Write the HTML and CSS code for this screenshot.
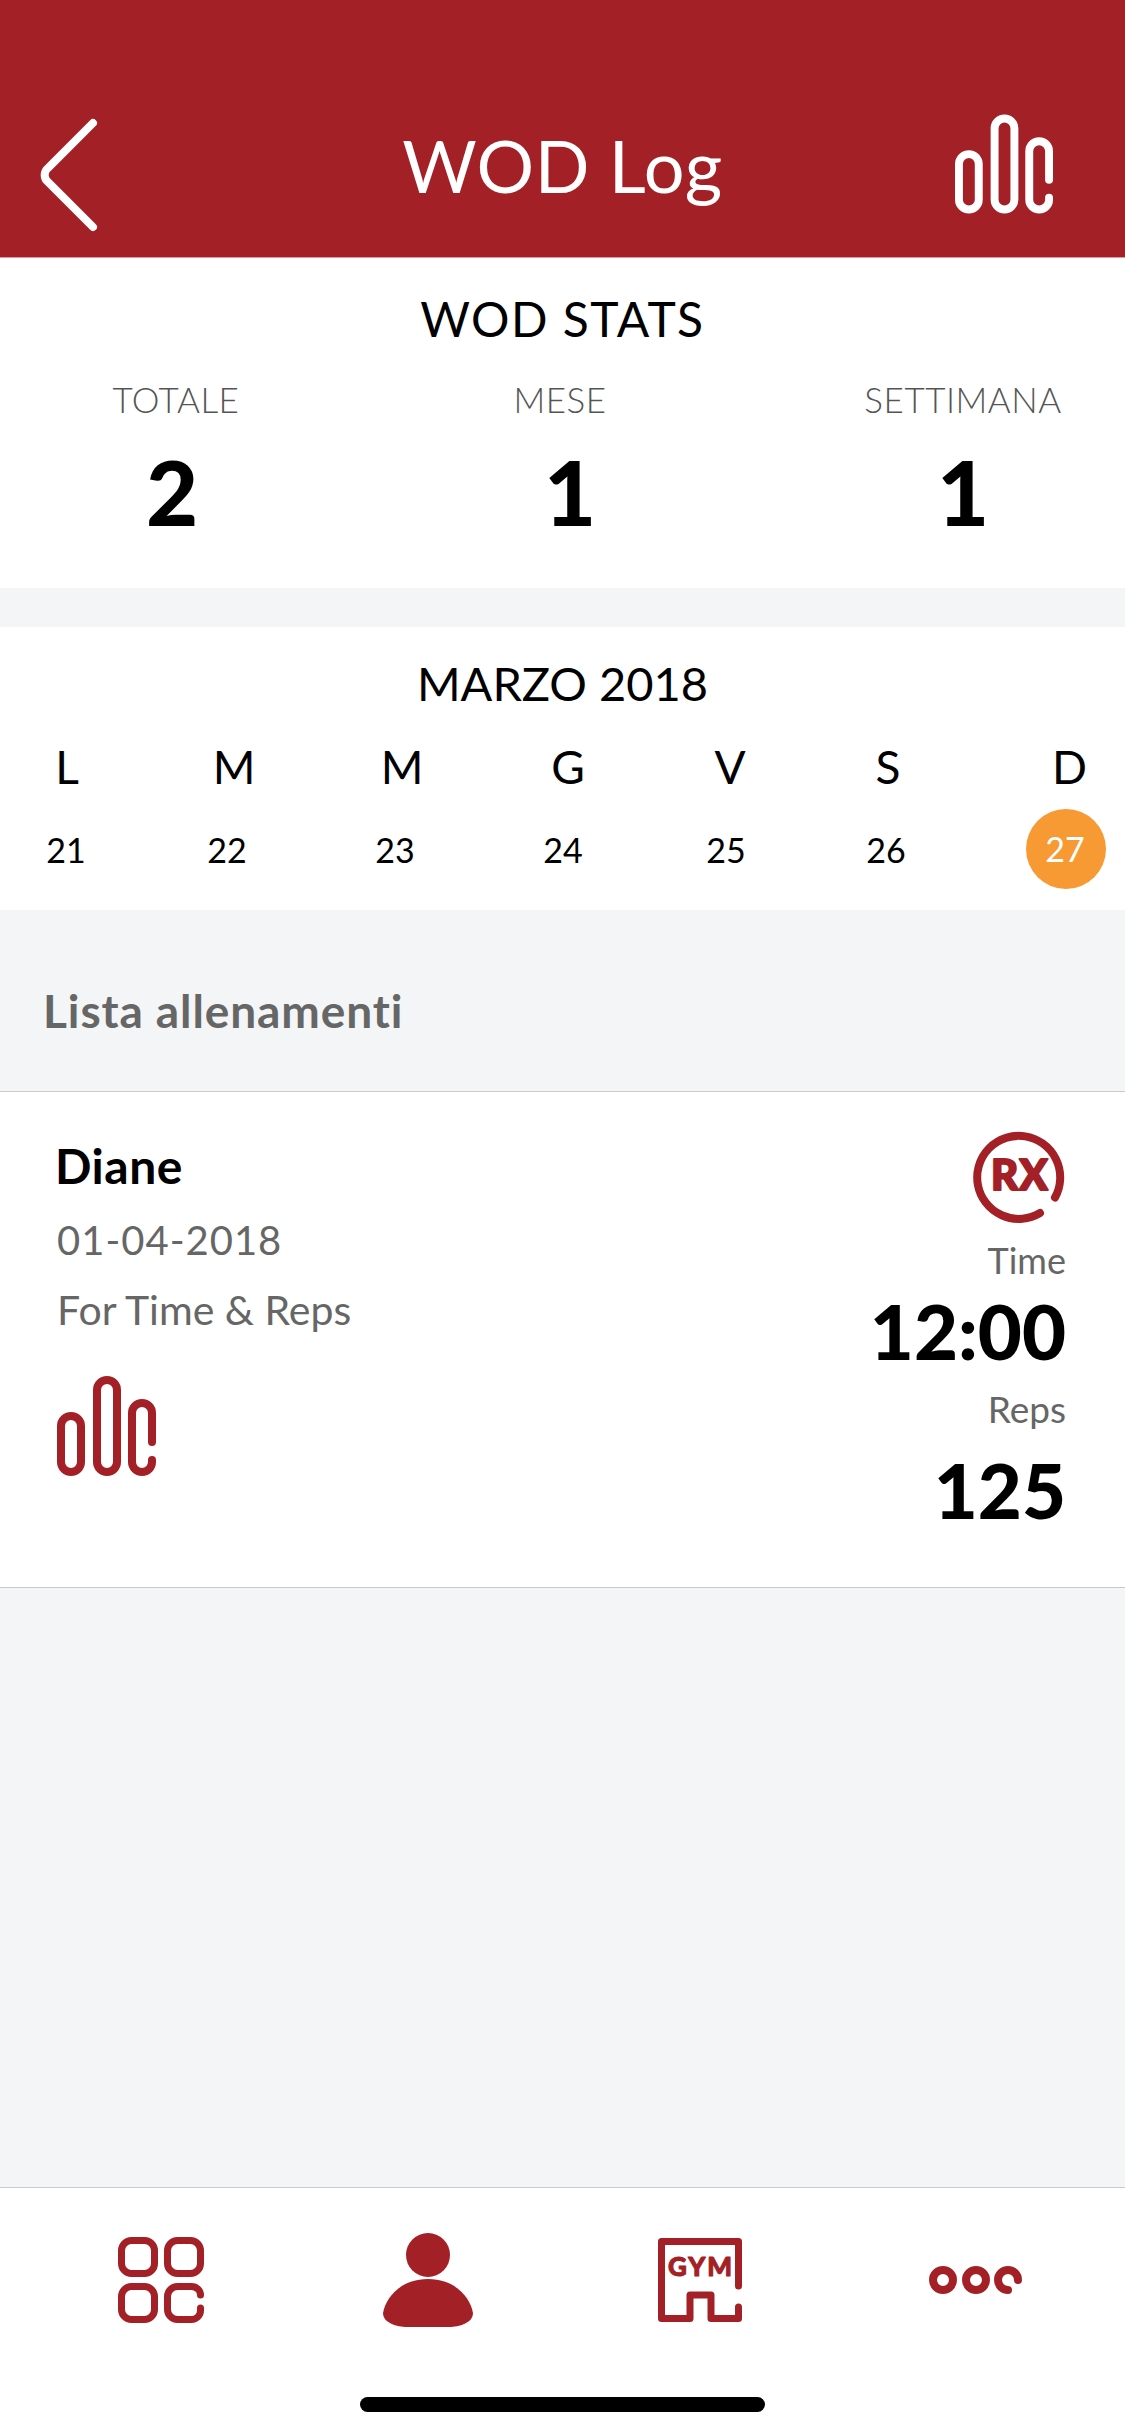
FILE: index.html
```html
<!DOCTYPE html>
<html lang="it">
<head>
  <meta charset="UTF-8" />
  <title>WOD Log</title>
  <link rel="stylesheet" href="styles.css">
</head>
<body>

<svg class="defs" width="0" height="0">
  <symbol id="bars" viewBox="0 0 100 100">
    <g fill="none" stroke="currentColor" stroke-width="8" stroke-linecap="round">
      <rect x="4" y="40" width="20" height="56" rx="10" />
      <rect x="40" y="4" width="20" height="92" rx="10" />
      <path d="M95 66V37a10 10 0 0 0-20 0V86a10 10 0 0 0 20 0V84" />
    </g>
  </symbol>
</svg>

<header class="topbar">
  <svg class="back" viewBox="0 0 60 116">
    <path d="M54 6L9 51a9 9 0 0 0 0 14L54 110" fill="none" stroke="currentColor" stroke-width="8" stroke-linecap="round" />
  </svg>
  <h1>WOD Log</h1>
  <svg class="bars-top"><use href="#bars" /></svg>
</header>

<section class="stats">
  <h2>WOD STATS</h2>
  <div class="stat-labels">
    <span>TOTALE</span>
    <span>MESE</span>
    <span>SETTIMANA</span>
  </div>
  <div class="stat-nums">
    <span>2</span>
    <span>1</span>
    <span>1</span>
  </div>
</section>

<section class="calendar">
  <h2>MARZO 2018</h2>
  <div class="week-days">
    <span>L</span><span>M</span><span>M</span><span>G</span><span>V</span><span>S</span><span>D</span>
  </div>
  <div class="week-dates">
    <span>21</span><span>22</span><span>23</span><span>24</span><span>25</span><span>26</span>
    <span class="today">27</span>
  </div>
</section>

<h3 class="list-title">Lista allenamenti</h3>

<article class="wod">
  <div class="wod-info">
    <div class="wod-name">Diane</div>
    <div class="wod-date">01-04-2018</div>
    <div class="wod-type">For Time &amp; Reps</div>
    <svg class="bars-card"><use href="#bars" /></svg>
  </div>
  <div class="wod-score">
    <svg class="rx" viewBox="0 0 92 92">
      <path d="M66 84A41.5 41.5 0 1 1 81 68.500" fill="none" stroke="currentColor" stroke-width="8" stroke-linecap="round" />
      <text x="46" y="61" text-anchor="middle">RX</text>
    </svg>
    <div class="score-label">Time</div>
    <div class="score-value">12:00</div>
    <div class="score-label reps">Reps</div>
    <div class="score-value total">125</div>
  </div>
</article>

<div class="spacer"></div>

<nav class="tabbar">
  <div class="tabs">
    <svg class="tab-grid" viewBox="0 0 86 86">
      <g fill="none" stroke="currentColor" stroke-width="7" stroke-linecap="round">
        <rect x="3.500" y="3.500" width="33" height="33" rx="10" />
        <rect x="49.500" y="3.500" width="33" height="33" rx="10" />
        <rect x="3.500" y="49.500" width="33" height="33" rx="10" />
        <path d="M82.500 58a9 8.500 0 0 0-9-8.500H59.500a10 10 0 0 0-10 10V72.500a10 10 0 0 0 10 10H73.500a9 9 0 0 0 9-9V71" />
      </g>
    </svg>
    <svg class="tab-user" viewBox="0 0 90 94">
      <circle cx="45" cy="22" r="22" />
      <path d="M45 46C18 46 3 64 0 80c0 10 14 14 24 14H66c10 0 24-4 24-14C87 64 72 46 45 46z" />
    </svg>
    <svg class="tab-gym" viewBox="0 0 84 84">
      <path d="M80.500 48V3.500H3.500V80.500H32V57H53V80.500H80.500V69" fill="none" stroke="currentColor" stroke-width="7" stroke-linecap="round" stroke-linejoin="round" />
      <text x="43" y="38" text-anchor="middle">GYM</text>
    </svg>
    <svg class="tab-more" viewBox="0 0 93 28">
      <g fill="none" stroke="currentColor" stroke-width="8" stroke-linecap="round">
        <circle cx="14" cy="14" r="10" />
        <circle cx="47" cy="14" r="10" />
        <path d="M79 24A10 10 0 1 1 89 14" />
      </g>
    </svg>
  </div>
  <div class="home-bar"></div>
</nav>

</body>
</html>
```

FILE: styles.css
```css
* {
  box-sizing: border-box;
}

html, body {
  height: 100%;
}

body {
  margin: 0;
  width: 1125px;
  height: 2436px;
  display: flex;
  flex-direction: column;
  overflow: hidden;
  background-color: #f4f5f7;
  color: #000;
  font-family: Lato, "Open Sans", sans-serif;
  font-variant-ligatures: none;
}

h1, h2, h3 {
  margin: 0;
  font-weight: 400;
}

.defs {
  position: absolute;
}

/* top bar */
.topbar {
  height: 258px;
  display: grid;
  grid-template-columns: 1fr auto 1fr;
  align-items: end;
  background-color: #a32027;
  border-bottom: 1px solid #d8a0a3;
  color: #fff;
}

.back {
  width: 60px;
  height: 116px;
  margin: 0 0 24px 39px;
}

.topbar h1 {
  font-size: 72px;
  font-weight: 400;
  line-height: 90px;
  letter-spacing: 0.5px;
  margin-bottom: 47px;
}

.bars-top {
  width: 99px;
  height: 100px;
  justify-self: end;
  margin: 0 71px 43px 0;
}

/* stats */
.stats {
  height: 330px;
  background-color: #fff;
  text-align: center;
}

.stats h2 {
  font-size: 48px;
  line-height: 60px;
  padding-top: 31px;
  height: 91px;
  letter-spacing: 1.500px;
}

.stat-labels,
.stat-nums {
  display: grid;
  text-align: center;
}

.stat-labels {
  grid-template-columns: 352px 416px 1fr;
  margin-top: 28px;
  font-size: 35px;
  font-weight: 300;
  line-height: 44px;
  letter-spacing: 0.5px;
  color: #555;
}

.stat-labels span:last-child {
  padding-left: 33px;
}

.stat-nums {
  grid-template-columns: 344px 452px 1fr;
  margin-top: 20px;
  font-size: 90px;
  font-weight: 900;
  line-height: 100px;
}

.stat-nums span:last-child {
  padding-left: 5px;
}

/* calendar */
.calendar {
  height: 283px;
  margin-top: 39px;
  background-color: #fff;
}

.calendar h2 {
  font-size: 47px;
  line-height: 60px;
  padding-top: 26px;
  height: 88px;
  text-align: center;
}

.week-days,
.week-dates {
  display: grid;
  text-align: center;
}

.week-days {
  grid-template-columns: 134px 200px 136px 196px 128px 188px 143px;
  margin-top: 22px;
  font-size: 46px;
  line-height: 60px;
}

.week-days span:last-child {
  text-align: right;
  padding-right: 38px;
}

.week-dates {
  grid-template-columns: 132px 190px 146px 190px 136px 184px 147px;
  align-items: center;
  font-size: 34px;
  height: 80px;
  margin-top: 12px;
}

.today {
  width: 80px;
  height: 80px;
  justify-self: end;
  margin-right: 19px;
  padding-right: 2px;
  border-radius: 50%;
  background-color: #f79a33;
  color: #fff;
  line-height: 80px;
}

/* list */
.list-title {
  height: 182px;
  padding: 73px 0 0 43px;
  font-size: 46px;
  font-weight: 700;
  line-height: 56px;
  letter-spacing: 0.9px;
  color: #666;
  border-bottom: 1px solid #c9cacc;
}

.wod {
  height: 496px;
  display: flex;
  justify-content: space-between;
  background-color: #fff;
  border-bottom: 1px solid #c9cacc;
  padding: 0 59px 0 55px;
}

.wod-name {
  margin-top: 44px;
  font-size: 48px;
  font-weight: 700;
  line-height: 60px;
  letter-spacing: 0.5px;
}

.wod-date {
  margin: 16px 0 0 2px;
  font-size: 40px;
  line-height: 56px;
  color: #666;
  letter-spacing: 1px;
}

.wod-type {
  margin: 14px 0 0 2px;
  font-size: 41px;
  line-height: 56px;
  color: #666;
}

.bars-card {
  display: block;
  width: 100px;
  height: 100px;
  margin: 38px 0 0 2px;
  color: #a32027;
}

.wod-score {
  display: flex;
  flex-direction: column;
  align-items: flex-end;
}

.rx {
  width: 92px;
  height: 92px;
  margin-top: 37px;
  color: #a32027;
  overflow: visible;
}

.rx text {
  font-size: 42px;
  font-weight: 900;
  letter-spacing: 1px;
  fill: currentColor;
  stroke: currentColor;
  stroke-width: 2;
  stroke-linejoin: round;
}

.score-label {
  margin-top: 16px;
  font-size: 36px;
  line-height: 46px;
  color: #666;
}

.score-label.reps {
  margin-top: 10px;
  font-size: 37px;
}

.score-value {
  font-size: 76px;
  font-weight: 900;
  line-height: 90px;
  margin-top: 3px;
}

.score-value.total {
  margin-top: 13px;
}

.spacer {
  flex: 1;
}

/* bottom tabs */
.tabbar {
  height: 249px;
  background-color: #fff;
  border-top: 1px solid #c9cacc;
  color: #a32027;
}

.tabs {
  display: grid;
  grid-template-columns: 265px 275px 271px 1fr;
  align-items: center;
  height: 94px;
  margin-top: 45px;
  padding-left: 118px;
}

.tab-grid {
  width: 86px;
  height: 86px;
}

.tab-user {
  width: 90px;
  height: 94px;
  fill: currentColor;
}

.tab-gym {
  width: 84px;
  height: 84px;
}

.tab-gym text {
  font-size: 26px;
  font-weight: 900;
  letter-spacing: 2px;
  fill: currentColor;
  stroke: currentColor;
  stroke-width: 1;
  stroke-linejoin: round;
}

.tab-more {
  width: 93px;
  height: 28px;
}

.home-bar {
  width: 405px;
  height: 15px;
  margin: 70px auto 0;
  border-radius: 8px;
  background-color: #000;
}
```
